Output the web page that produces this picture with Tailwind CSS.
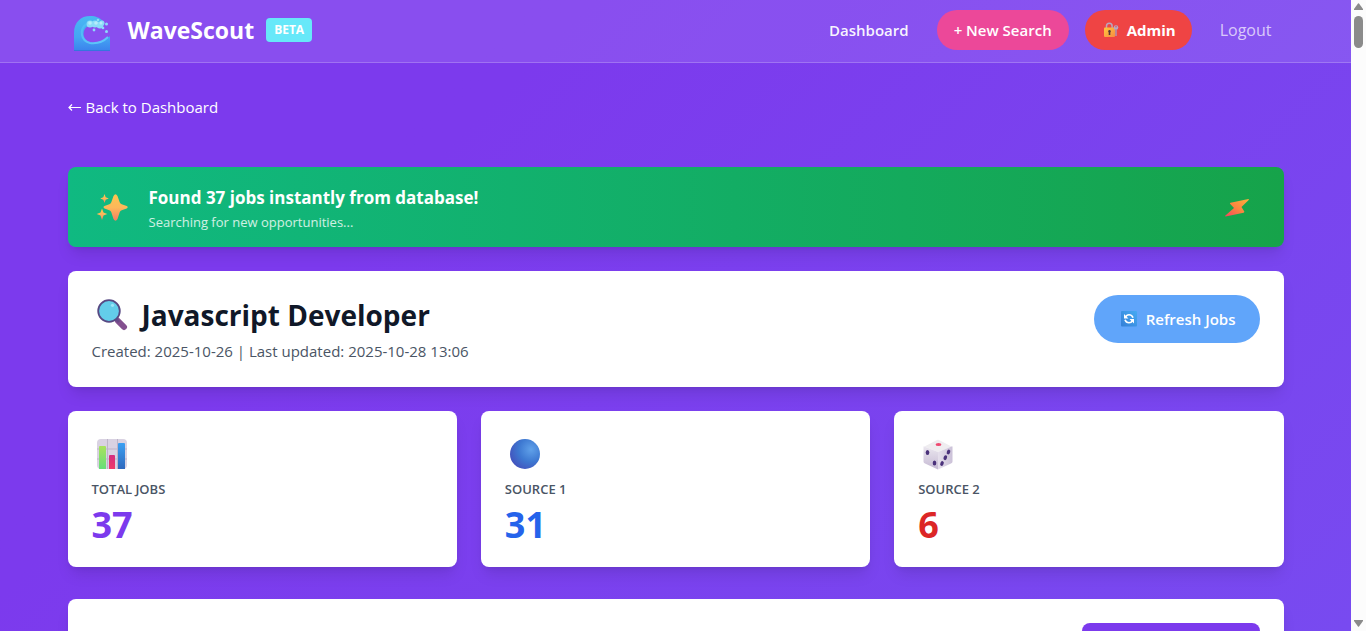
<!DOCTYPE html>
<html lang="en">
<head>
<meta charset="utf-8">
<meta name="viewport" content="width=device-width, initial-scale=1">
<title>WaveScout</title>
<script src="https://cdn.jsdelivr.net/npm/@tailwindcss/browser@4"></script>
</head>
<body class="flex h-screen overflow-hidden font-['Open_Sans','Noto_Sans',sans-serif] text-[15px] leading-6">
<div class="flex-1 min-w-0 h-full overflow-hidden bg-linear-135 from-[#7c3aed] from-30% to-[#784af0]">
  <header class="border-b border-white/20 bg-white/10">
    <nav class="mx-auto flex h-[62px] max-w-7xl items-center justify-between px-8 pb-0.5">
      <a href="#" class="flex items-center pl-1.5">
        <svg class="mt-2 size-9" viewBox="0 0 36 36" aria-hidden="true">
          <defs>
            <linearGradient id="wave" x1="0" y1="0" x2="0" y2="1"><stop offset="0" stop-color="#48b9f2"/><stop offset=".6" stop-color="#45a5f3"/><stop offset="1" stop-color="#3b82ec"/></linearGradient>
            <linearGradient id="curl" x1="0" y1="0" x2="1" y2="1"><stop offset="0" stop-color="#4dbbf5"/><stop offset="1" stop-color="#62c8fa"/></linearGradient>
          </defs>
          <path fill="url(#wave)" d="M0 35V17C0 6 7 0 16 0c6 0 10 2 13 5l-4 4c-5-2-13 0-15 6-2 7 3 12 11 12 6 0 11-3 15-7v15z"/>
          <path fill="none" stroke="url(#curl)" stroke-width="2" d="M12 8C5 14 7 25 16 27c8 1 13-1 18-6"/>
          <g fill="#8bdcf8"><circle cx="16" cy="8" r="3.5"/><circle cx="21" cy="8" r="3.5"/><circle cx="26" cy="9" r="3.5"/><circle cx="24" cy="4" r="1.3"/><circle cx="28" cy="7" r="2.5"/><circle cx="32.500" cy="8" r="1.500"/><circle cx="29" cy="12" r="1.300"/><circle cx="32.500" cy="15.500" r="1.500"/><circle cx="20" cy="14" r="1.400"/></g>
          <g fill="#b5ecfb"><circle cx="16" cy="7" r="1.800"/><circle cx="22" cy="7" r="1.800"/><circle cx="27" cy="7" r="1.500"/></g>
          <path fill="#3476dd" d="M0 34h36v1H0z"/>
        </svg>
        <span class="ml-[18px] text-[23px] font-bold leading-8 text-white">WaveScout</span>
        <span class="ml-3 rounded bg-[#67e8f9] px-2 py-1 text-xs font-bold leading-4 text-white">BETA</span>
      </a>
      <div class="flex items-center gap-4 font-semibold text-white">
        <a href="#" class="px-3 text-white/95">Dashboard</a>
        <a href="#" class="rounded-full bg-[#ec4899] px-[17px] py-2">+ New Search</a>
        <a href="#" class="flex items-center gap-2 rounded-full bg-[#ef4444] px-4 py-2">
          <svg class="ml-0.5 size-4" viewBox="0 0 16 16" aria-hidden="true">
            <defs><linearGradient id="lock" x1="0" y1="0" x2="1" y2="1"><stop stop-color="#ffc83d"/><stop offset="1" stop-color="#f98a42"/></linearGradient></defs>
            <path d="M3.500 7V4a2.800 2.800 0 0 1 5.600 0v3" fill="none" stroke="#b9a6bd" stroke-width="1.500"/>
            <rect x="1" y="5.500" width="11" height="9.500" rx="1" fill="url(#lock)"/>
            <path d="M6.500 8a1.400 1.400 0 0 0-.8 2.500V13h1.600v-2.500A1.400 1.400 0 0 0 6.500 8z" fill="#573538"/>
            <circle cx="13" cy="5.500" r="2.300" fill="#b4a9c5"/><path d="M12.300 7h1.400v7h-1.400z" fill="#a99db9"/><circle cx="13" cy="4.800" r=".7" fill="#ef4444"/>
          </svg>
          <span class="font-bold">Admin</span></a>
        <a href="#" class="px-3 text-base font-normal text-white/70">Logout</a>
      </div>
    </nav>
  </header>

  <main class="mx-auto max-w-7xl px-8 pt-8">
    <a href="#" class="flex h-6 w-max items-center gap-1 text-white">
      <svg class="size-3.5" viewBox="0 0 14 14" fill="none" stroke="currentColor" stroke-width="1.200" aria-hidden="true"><path d="M13 7.500H1M4 4.500 1 7.500 4 10.500"/></svg>
      Back to Dashboard</a>

    <section class="mt-12 flex h-20 items-center rounded-lg bg-linear-to-r from-[#10b981] to-[#16a34a] px-6 pt-0.5 text-white shadow-lg">
      <svg class="mx-1 size-8" viewBox="0 0 32 32" aria-hidden="true">
        <defs><linearGradient id="spark" x1="0" y1="0" x2="0" y2="1"><stop stop-color="#fcc54f"/><stop offset=".5" stop-color="#fdb85a"/><stop offset="1" stop-color="#f47c62"/></linearGradient></defs>
        <g fill="url(#spark)"><path d="M17.500 4q2-3.500 4 0l2.200 6.200q.6 1.500 2 2l5 1.800q2 1.200 0 2.400l-5 1.900q-1.500.5-2 2L21.500 27q-2 3.500-4 0l-2.200-6.700q-.5-1.500-2-2L8.500 16.500q-2-1.200 0-2.400l4.800-1.800q1.500-.5 2-2z"/>
        <path d="m8.500 2 1.200 3.200 3.100 1.300-3.100 1.300L8.500 11 7.300 7.800 4.200 6.500l3.100-1.300z"/>
        <path d="m6 16.500 1.500 4 3.800 1.500-3.800 1.500L6 28l-1.500-4.500L.7 22l3.800-1.500z"/></g>
      </svg>
      <div class="ml-[17px] flex-1">
        <p class="text-[17px] font-bold leading-7">Found 37 jobs instantly from database!</p>
        <p class="text-[13px] leading-5 text-white/80">Searching for new opportunities...</p>
      </div>
      <svg class="mr-[11px] h-5 w-6" viewBox="0 0 24 20" aria-hidden="true">
        <defs><linearGradient id="bolt" x1="1" y1="0" x2="0" y2="1"><stop stop-color="#fbb13c"/><stop offset=".5" stop-color="#fb863f"/><stop offset="1" stop-color="#f4455e"/></linearGradient></defs>
        <path fill="url(#bolt)" d="M5.500 4.700 23.500 1q.6.400.2 1L16.500 9l2.800 4.500q.2 1-.7 1.200L.6 18.500q-.7-.4-.2-1L9 10 5 5.700q-.2-.7.500-1z"/>
      </svg>
    </section>

    <section class="mt-6 flex h-[116px] items-start justify-between rounded-lg bg-white p-6 shadow-lg">
      <div>
        <h1 class="flex h-10 items-center text-[28px] font-bold leading-10 text-gray-900">
          <svg class="mx-1 size-8" viewBox="0 0 32 32" aria-hidden="true">
            <path d="m22 22 6 6" stroke="#84508f" stroke-width="6" stroke-linecap="round"/>
            <path d="m20 20 3 3" stroke="#694989" stroke-width="3"/>
            <circle cx="13" cy="12" r="10.800" fill="#63cdea" stroke="#574983" stroke-width="1.800"/>
            <circle cx="16.500" cy="6.300" r="1.600" fill="#9ce4f8"/>
          </svg>
          <span class="ml-2.5">Javascript Developer</span>
        </h1>
        <p class="leading-8 text-gray-600">Created: 2025-10-26 | Last updated: 2025-10-28 13:06</p>
      </div>
      <button type="button" class="flex h-12 items-center gap-2 rounded-full bg-[#60a5fa] px-6 font-semibold text-white">
        <svg class="ml-0.5 size-[18px]" viewBox="0 0 18 18" aria-hidden="true">
          <defs><linearGradient id="sync" x1="1" y1="0" x2="0" y2="1"><stop stop-color="#45aaf3"/><stop offset="1" stop-color="#347fd6"/></linearGradient></defs>
          <rect x="1" y="1" width="16" height="15.500" rx="1" fill="url(#sync)"/>
          <g fill="none" stroke="#fff" stroke-width="1.600"><path d="M5.500 7.200Q6.500 4.800 9 4.800q3 0 4 3"/><path d="M12.700 10.300Q11.500 12.700 9 12.700q-3 0-4-3"/></g>
          <path fill="#fff" d="M4 4v4.500h4.500zM14 13.500V9H9.500z"/>
        </svg>
        Refresh Jobs</button>
    </section>

    <section class="mt-6 grid grid-cols-3 gap-6">
      <article class="h-[156px] rounded-lg bg-white p-6 shadow-lg">
        <svg class="mx-1 mt-[3px] size-8" viewBox="0 0 32 32" aria-hidden="true">
          <defs>
            <linearGradient id="g1" x1="0" y1="0" x2="0" y2="1"><stop stop-color="#a9e25c"/><stop offset="1" stop-color="#67de7a"/></linearGradient>
            <linearGradient id="g2" x1="0" y1="0" x2="0" y2="1"><stop stop-color="#d42d80"/><stop offset="1" stop-color="#f03a68"/></linearGradient>
            <linearGradient id="g3" x1="0" y1="0" x2="0" y2="1"><stop stop-color="#3ba0f2"/><stop offset="1" stop-color="#2f68bd"/></linearGradient>
          </defs>
          <rect x="1" y="1" width="30" height="30" rx="4" fill="#d9d2e2"/>
          <path d="M1 11h30M1 21h30M11.500 1v30M21.500 1v30" stroke="#bdb4c8"/>
          <path d="M3 9q0-1 1-1h5q1 0 1 1v22H3z" fill="url(#g1)"/>
          <path d="M13 18q0-1 1-1h4q1 0 1 1v13h-6z" fill="url(#g2)"/>
          <path d="M22 6q0-1 1-1h5q1 0 1 1v25h-7z" fill="url(#g3)"/>
        </svg>
        <h2 class="mt-[9px] text-[13px] font-semibold leading-5 text-gray-600">TOTAL JOBS</h2>
        <p class="mt-1.5 text-4xl font-bold text-[#7c3aed]">37</p>
      </article>
      <article class="h-[156px] rounded-lg bg-white p-6 shadow-lg">
        <svg class="mx-1 mt-[3px] size-8" viewBox="0 0 32 32" aria-hidden="true">
          <defs><radialGradient id="ball" cx=".7" cy=".35" r=".75"><stop stop-color="#60a1e9"/><stop offset=".55" stop-color="#3d78d1"/><stop offset="1" stop-color="#4353bd"/></radialGradient></defs>
          <circle cx="16" cy="16" r="15" fill="url(#ball)"/>
        </svg>
        <h2 class="mt-[9px] text-[13px] font-semibold leading-5 text-gray-600">SOURCE 1</h2>
        <p class="mt-1.5 text-4xl font-bold text-[#2563eb]">31</p>
      </article>
      <article class="h-[156px] rounded-lg bg-white p-6 shadow-lg">
        <svg class="mx-1 mt-[3px] size-8" viewBox="0 0 32 32" aria-hidden="true">
          <defs>
            <linearGradient id="d1" x1="0" y1="0" x2="0" y2="1"><stop stop-color="#ebe7ef"/><stop offset="1" stop-color="#c5b9d3"/></linearGradient>
            <linearGradient id="d2" x1="0" y1="0" x2="1" y2="0"><stop stop-color="#e6e0ec"/><stop offset="1" stop-color="#cbc1d8"/></linearGradient>
          </defs>
          <path d="M2.500 8.500 15 2q1-.5 2 0l12.500 6.500L16 14z" fill="#efedf0"/>
          <path d="M1.500 9q0-1 1-.5L16 14v17.500L3 25.500q-1.500-.7-1.500-2z" fill="url(#d1)"/>
          <path d="M30.500 9q0-1-1-.5L16 14v17.500l13-6q1.500-.7 1.500-2z" fill="url(#d2)"/>
          <ellipse cx="16.500" cy="6.500" rx="2.900" ry="1.600" fill="#ee4a70"/>
          <g fill="#4b327b"><ellipse cx="5.500" cy="14.500" rx="1.800" ry="2.600"/><ellipse cx="12.500" cy="25" rx="1.800" ry="2.600"/><ellipse cx="26.500" cy="14" rx="1.700" ry="2.500" transform="rotate(20 26.500 14)"/><ellipse cx="23.300" cy="19.700" rx="1.700" ry="2.500" transform="rotate(20 23.300 19.700)"/><ellipse cx="20" cy="25.500" rx="1.700" ry="2.500" transform="rotate(20 20 25.500)"/></g>
        </svg>
        <h2 class="mt-[9px] text-[13px] font-semibold leading-5 text-gray-600">SOURCE 2</h2>
        <p class="mt-1.5 text-4xl font-bold text-[#dc2626]">6</p>
      </article>
    </section>

    <section class="mt-8 flex h-40 items-start justify-end rounded-lg bg-white p-6 shadow-lg">
      <button type="button" aria-label="Action" class="h-10 w-[178px] rounded-lg bg-[#7c3aed]"></button>
    </section>
  </main>
</div>

<div class="flex h-full w-[15px] flex-col items-center bg-[#fcfcfc]" aria-hidden="true">
  <svg class="mt-[3px] h-[7px] w-[9px]" viewBox="0 0 9 7" fill="#8b8b8b"><path d="M4 .5q.5-.6 1 0L9 6v1H0V6z"/></svg>
  <div class="mt-1.5 h-8 w-[9px] rounded-full bg-[#8b8b8b]"></div>
  <svg class="mt-auto mb-1 h-[7px] w-[9px]" viewBox="0 0 9 7" fill="#8b8b8b"><path d="M4 6.500q.5.600 1 0L9 1V0H0v1z"/></svg>
</div>
</body>
</html>
